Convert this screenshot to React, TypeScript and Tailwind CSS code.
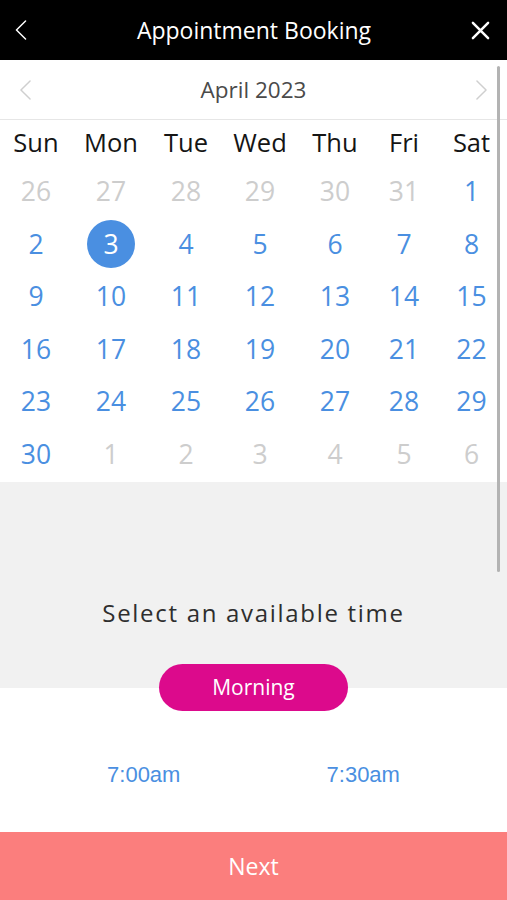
import React from 'react'

const weekDays = ['Sun', 'Mon', 'Tue', 'Wed', 'Thu', 'Fri', 'Sat']

const weeks: { day: number; inMonth: boolean }[][] = [
    [26, 27, 28, 29, 30, 31].map((d) => ({ day: d, inMonth: false })).concat([{ day: 1, inMonth: true }]),
    [2, 3, 4, 5, 6, 7, 8].map((d) => ({ day: d, inMonth: true })),
    [9, 10, 11, 12, 13, 14, 15].map((d) => ({ day: d, inMonth: true })),
    [16, 17, 18, 19, 20, 21, 22].map((d) => ({ day: d, inMonth: true })),
    [23, 24, 25, 26, 27, 28, 29].map((d) => ({ day: d, inMonth: true })),
    [{ day: 30, inMonth: true }].concat([1, 2, 3, 4, 5, 6].map((d) => ({ day: d, inMonth: false }))),
]

const cols = 'grid grid-cols-[72px_78px_72px_76px_74px_64px_71px]'

const Chevron = ({ dir, className }: { dir: 'left' | 'right'; className: string }) => (
    <svg viewBox="0 0 12 22" className={className} fill="none" stroke="currentColor" strokeWidth={1.6} strokeLinecap="round" strokeLinejoin="round">
        {dir === 'left' ? <path d="M11 1 1 11l10 10" /> : <path d="M1 1l10 10L1 21" />}
    </svg>
)

const App = () => {
    return (
        <div className="relative flex flex-col h-[900px] w-[507px] bg-white font-['Open_Sans',sans-serif] overflow-hidden">
            {/* header */}
            <div className="flex items-center justify-between h-[60px] bg-black px-[15px] text-white">
                <Chevron dir="left" className="w-[12px] h-[20px]" />
                <p className="text-[23px] leading-none ml-[10px]">Appointment Booking</p>
                <svg viewBox="0 0 20 20" className="w-[19px] h-[19px] mr-[2px]" stroke="currentColor" strokeWidth={2.6} strokeLinecap="round">
                    <path d="M2 2l16 16M18 2 2 18" />
                </svg>
            </div>

            {/* month */}
            <div className="flex items-center justify-between h-[60px] border-b border-[#e6e6e6] px-[20px] text-[#cfcfcf]">
                <Chevron dir="left" className="w-[11px] h-[20px]" />
                <p className="text-[22.5px] text-[#4a4a4a]">April 2023</p>
                <Chevron dir="right" className="w-[11px] h-[20px]" />
            </div>

            {/* calendar */}
            <div className={`${cols} h-[45.5px] items-center text-[25.5px] text-[#151515]`}>
                {weekDays.map((d) => (
                    <span key={d} className="text-center mt-[-2px]">{d}</span>
                ))}
            </div>
            {weeks.map((week, i) => (
                <div key={i} className={`${cols} h-[52.6px] items-center text-[26.5px]`}>
                    {week.map((c, j) => (
                        <div key={j} className="flex justify-center">
                            {c.inMonth && c.day === 3 ? (
                                <span className="flex items-center justify-center w-[48px] h-[48px] rounded-full bg-[#4a8fe1] text-white">3</span>
                            ) : (
                                <span className={c.inMonth ? 'text-[#4a8fe1]' : 'text-[#cdcdcd]'}>{c.day}</span>
                            )}
                        </div>
                    ))}
                </div>
            ))}

            {/* time picker */}
            <div className="flex flex-col items-center bg-[#f1f1f1] mt-[1px] pt-[117px]">
                <p className="text-[24px] leading-[28px] tracking-[1.7px] text-[#2e2e2e]">Select an available time</p>
            </div>
            <div className="flex justify-center pt-[37px] bg-[linear-gradient(to_bottom,#f1f1f1_0,#f1f1f1_61px,#ffffff_61px)]">
                <button className="w-[189px] h-[47px] rounded-full bg-[#dc0a8c] text-white text-[21px]">Morning</button>
            </div>
            <div className="grid grid-cols-2 px-[34px] mt-[50px] font-['Liberation_Sans',Arial,sans-serif] text-[22px] leading-[28px] text-[#4a8fe1]">
                <span className="text-center">7:00am</span>
                <span className="text-center">7:30am</span>
            </div>
            <div className="flex-1" />
            <button className="h-[68px] w-full bg-[#fb7e7d] text-white text-[23px]">Next</button>

            {/* scrollbar */}
            <div className="absolute left-[497px] top-[66px] w-[3px] h-[506px] rounded-full bg-[#b3b3b3]" />
        </div>
    )
}

export default App
